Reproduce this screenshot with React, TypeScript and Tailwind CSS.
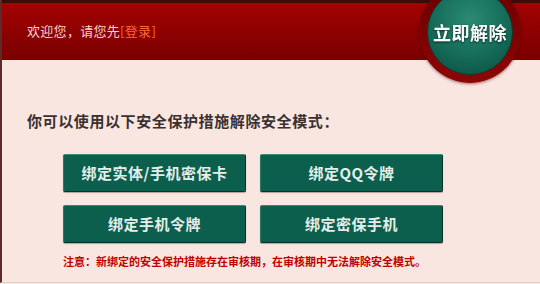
import React from 'react';

const actions = ['绑定实体/手机密保卡', '绑定QQ令牌', '绑定手机令牌', '绑定密保手机'];

const cjk = { fontFamily: '"Noto Sans CJK SC", "Noto Sans", sans-serif' };

export default function App() {
  return (
    <div className="relative w-[540px] h-[284px] overflow-hidden bg-[#f9e6e1]" style={cjk}>
      <div className="h-[283px] border-l-2 border-l-[#5e2a2a] border-b border-b-[#e0cfcb]">
        {/* Header band */}
        <div className="h-[60px] border-t-[3px] border-t-[#3b0c0c] bg-gradient-to-b from-[#a30202] to-[#7a0000] flex items-center pl-[25px]">
          <div className="text-[13px] text-[#f2d4cf] leading-none -mt-[3px] tracking-[0.3px]">
            欢迎您，请您先<span className="text-[#ff6a3a]">[登录]</span>
          </div>
        </div>

        {/* Body */}
        <div className="pt-[51px] pl-[25px]">
          <h2 className="text-[15px] leading-[20px] font-bold text-[#3b3030] tracking-[0.6px]">
            你可以使用以下安全保护措施解除安全模式：
          </h2>

          <div className="grid grid-cols-[183px_183px] gap-x-[14px] gap-y-[13px] mt-[23px] ml-[36px]">
            {actions.map((a) => (
              <button
                key={a}
                className="h-[38px] flex items-center justify-center rounded-[2px] bg-[#0c5e4d] border border-[#05352b] border-t-[#3a8a76] border-l-[#2a7a66] text-[#e3eeea] text-[15px] font-bold tracking-[0.5px] shadow-[0_1px_1px_rgba(60,20,20,0.35)]"
              >
                {a}
              </button>
            ))}
          </div>

          <p className="mt-[10px] ml-[36px] text-[11px] leading-[16px] font-bold text-[#c00000]">
            注意：新绑定的安全保护措施存在审核期，在审核期中无法解除安全模式。
          </p>
        </div>
      </div>

      {/* Round unlock badge over the header */}
      <div className="absolute left-[419px] top-[-19px] w-[102px] h-[102px] rounded-full bg-gradient-to-b from-[#6a0000] to-[#8e0606] shadow-[0_1px_3px_rgba(60,0,0,0.5)] flex items-center justify-center">
        <div className="w-[86px] h-[86px] rounded-full bg-[radial-gradient(circle_at_50%_35%,#2a8a74_0%,#146b58_55%,#0b4c3e_100%)] border border-[#0a3f34] flex items-center justify-center">
          <span className="text-white text-[18px] font-bold leading-none tracking-[0.5px] drop-shadow-[0_1px_1px_rgba(0,0,0,0.6)]">
            立即解除
          </span>
        </div>
      </div>
    </div>
  );
}
